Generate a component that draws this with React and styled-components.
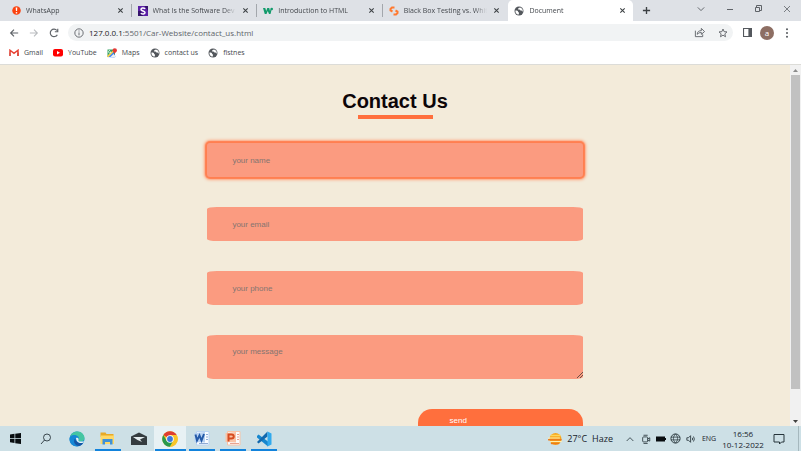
import React from "react";
import styled, { createGlobalStyle, css } from "styled-components";

const GlobalStyle = createGlobalStyle`
  *, *::before, *::after { box-sizing: border-box; }
  body { margin: 0; }
  button, input, textarea { margin: 0; padding: 0; border: 0; background: none; color: inherit; font: inherit; }
  svg { display: block; flex: none; }
`;

const Screen = styled.div`
  display: flex;
  flex-direction: column;
  height: 100vh;
  overflow: hidden;
  background: #fff;
  font-family: "Open Sans", "Noto Sans", sans-serif;
  font-size: 8px;
  line-height: 12px;
  color: #5f6368;
`;

const TabStrip = styled.header`
  display: flex;
  flex: none;
  height: 21px;
  padding-left: 6px;
  background: #dee1e6;
`;

const Tabs = styled.nav`
  display: flex;
  flex: 0 1 627px;
  min-width: 0;
`;

const TabItem = styled.div`
  display: flex;
  align-items: center;
  flex: 1 1 0;
  min-width: 0;
  gap: 5px;
  padding: 0 6px;
  border-right: 1px solid #a3a7ac;
  ${(p) =>
    p.$active
      ? css`
          background: #fff;
          border-radius: 5px 5px 0 0;
          border-right: 0;
        `
      : css`
          height: 13px;
          margin: 4px 0;
        `}
  ${(p) => p.$last && css`border-right-color: transparent;`}
`;

const TabTitle = styled.a`
  flex: 1;
  min-width: 0;
  overflow: hidden;
  white-space: nowrap;
  font-size: 7px;
  color: #44484d;
  text-decoration: none;
  mask-image: linear-gradient(to right, #000 calc(100% - 12px), transparent);
`;

const IconButton = styled.button`
  display: grid;
  place-items: center;
  flex: none;
  width: ${(p) => p.$w || 20}px;
  height: ${(p) => p.$h || 20}px;
  color: ${(p) => p.$color || "#5f6368"};
`;

const WindowControls = styled.div`
  display: flex;
  margin-left: auto;
`;

const Toolbar = styled.div`
  display: flex;
  align-items: center;
  flex: none;
  height: 23px;
  padding: 0 4px;
`;

const AddressBar = styled.div`
  display: flex;
  align-items: center;
  flex: 1;
  min-width: 0;
  height: 17px;
  margin: 0 4px;
  padding: 0 1px 0 6px;
  gap: 5px;
  border-radius: 9px;
  background: #f1f3f4;
`;

const Url = styled.div`
  flex: 1;
  min-width: 0;
  overflow: hidden;
  white-space: nowrap;
  color: #60656a;

  b { font-weight: 400; color: #202124; }
`;

const Avatar = styled.button`
  width: 14px;
  height: 14px;
  margin: 0 3px;
  border-radius: 50%;
  background: #8d6e63;
  color: #fff;
  line-height: 12px;
`;

const Bookmarks = styled.nav`
  display: flex;
  flex: none;
  height: 21px;
  padding: 3px 9px 0;
  gap: 10px;
  border-bottom: 1px solid #dcdcd8;
`;

const Bookmark = styled.a`
  display: flex;
  align-items: center;
  height: 12px;
  gap: 5px;
  font-size: 7px;
  color: #44484d;
  text-decoration: none;
`;

const Viewport = styled.div`
  display: flex;
  flex: 1;
  min-height: 0;
  background: #f3ebda;
`;

const Page = styled.main`
  flex: 1;
  min-width: 0;
  overflow: hidden;
  padding-top: 24px;
  font-family: "Liberation Sans", Arial, sans-serif;
`;

const Heading = styled.h1`
  display: flex;
  flex-direction: column;
  align-items: center;
  gap: 2px;
  margin: 0 0 24px;
  font-size: 20px;
  line-height: 24px;
  color: #0c0508;

  &::after {
    content: "";
    width: 75px;
    height: 4px;
    background: #ff6f3d;
  }
`;

const Form = styled.form`
  display: flex;
  flex-direction: column;
  gap: 30px;
  width: 47.5%;
  margin: 0 auto;
`;

const fieldStyle = css`
  display: block;
  width: 100%;
  padding: 0 25px;
  border-radius: 10px / 2px;
  background: #fb9b80;
  color: #33201a;
  outline: none;

  &::placeholder { color: #857570; opacity: 1; }
`;

const Field = styled.input`
  ${fieldStyle}
  height: 34px;
  ${(p) => p.$highlighted && css`
    border-radius: 3px;
    box-shadow: 0 0 1px 2px #ff7f50, 0 0 3px 3px #ffa782;
  `}
`;

const MessageBox = styled.div`
  position: relative;

  svg { position: absolute; right: 0; bottom: 1px; }
`;

const Message = styled.textarea`
  ${fieldStyle}
  height: 44px;
  padding: 11px 25px;
  resize: none;
`;

const SendButton = styled.button`
  align-self: flex-end;
  width: 44%;
  height: 34px;
  padding: 0 32px 10px;
  border-radius: 14px;
  background: #ff6f3d;
  color: #fff;
  text-align: left;
`;

const ScrollTrack = styled.div`
  display: flex;
  flex-direction: column;
  align-items: center;
  flex: none;
  width: 11px;
  background: #f1f1f1;
`;

const ScrollThumb = styled.div`
  width: 9px;
  height: 87%;
  margin-bottom: auto;
  background: #c1c1c1;
`;

const Taskbar = styled.footer`
  display: flex;
  flex: none;
  height: 25px;
  background: #cde0e6;
  color: #17222a;
`;

const Apps = styled.div`
  display: flex;
`;

const AppButton = styled.button`
  display: flex;
  flex-direction: column;
  align-items: center;
  justify-content: center;
  width: ${(p) => (p.$narrow ? 30 : 31)}px;
  padding-top: 2px;
  background: ${(p) => (p.$active ? "#e8f1f4" : "transparent")};

  &:nth-child(6) { width: 32px; }
  &:last-child { width: 32px; }
  svg { margin: auto; }

  &::after {
    content: "";
    width: ${(p) => (p.$active ? 31 : 26)}px;
    height: 2px;
    background: ${(p) => (p.$running ? "#1283dc" : "transparent")};
  }
`;

const Tray = styled.div`
  display: flex;
  align-items: center;
  margin-left: auto;
`;

const Weather = styled.button`
  display: flex;
  align-items: center;
  gap: 5px;
  margin-right: 9px;
  font-size: 9px;
`;

const Language = styled.button`
  width: 22px;
  font-size: 7px;
`;

const Clock = styled.button`
  width: 46px;
  line-height: 11px;
  text-align: center;
  white-space: nowrap;
`;

const DesktopEdge = styled.div`
  align-self: stretch;
  width: 3px;
  margin-left: 6px;
  border-left: 1px solid #a5b8be;
`;

const Line = ({ d, size = 10, box = 12, w = 1, children }) => (
  <svg width={size} height={size} viewBox={`0 0 ${box} ${box}`} fill="none" stroke="currentColor" strokeWidth={w} aria-hidden="true">
    {d && <path d={d} />}
    {children}
  </svg>
);

const CloseIcon = () => <Line size={7} box={8} w={1.2} d="M1.500 1.500l5 5M6.500 1.500l-5 5" />;

const GlobeIcon = () => (
  <svg width="10" height="10" viewBox="0 0 20 20" aria-hidden="true">
    <circle cx="10" cy="10" r="9" fill="#54585d" />
    <path d="M3 9c3 0 5 0 5 2s2 1 2 3-1 2-1 3.500C5 17 2 13 3 9zM12 3c-1 1-4 1-4 3s3 0 4 2 3 0 4 2 1 1 1.500 0C18 7 15 3.500 12 3z" fill="#fff" />
  </svg>
);

const WhatsAppIcon = () => (
  <svg width="9" height="9" viewBox="0 0 18 18" aria-hidden="true">
    <circle cx="9" cy="9" r="8.500" fill="#fb4310" />
    <path d="M7.4 3h3.2l-.5 7H7.9z" fill="#fff" />
    <circle cx="9" cy="13.5" r="1.700" fill="#fff" />
  </svg>
);

const SimpliIcon = () => (
  <svg width="10" height="10" viewBox="0 0 20 20" aria-hidden="true">
    <path fill="#5b20a5" d="M0 0h20v20H0z" />
    <path fill="#35136b" d="M0 10h6l4 10H0zM13 0h7v10z" />
    <path d="M14.500 5.500C11 3 6 4 6 7s8 3 8 6-5 4-8.500 1.500" fill="none" stroke="#fff" strokeWidth="3" />
  </svg>
);

const WIcon = () => (
  <svg width="10" height="8" viewBox="0 0 20 16" aria-hidden="true">
    <path d="M0 2h4.500l2 6 2-6h4l1.500 6 2-6h2l-3 12h-3L9.500 8 7 14H3.500z" fill="#139b6c" />
    <circle cx="17.500" cy="4" r="2.500" fill="#139b6c" />
  </svg>
);

const BoxIcon = () => (
  <svg width="10" height="10" viewBox="0 0 20 20" fill="none" stroke="#ff7a30" strokeWidth="4" aria-hidden="true">
    <path d="M11 3H6L3 6v3l4 2M9 17h5l3-3v-3l-4-2" />
  </svg>
);

const GmailIcon = () => (
  <svg width="10" height="8" viewBox="0 0 20 16" fill="none" strokeWidth="3" aria-hidden="true">
    <path d="M2 14V2.500l8 6 8-6V14" stroke="#e94335" />
    <path d="M2 14V7" stroke="#d95a50" />
    <path d="M18 14V7" stroke="#d9453a" />
  </svg>
);

const YouTubeIcon = () => (
  <svg width="10" height="8" viewBox="0 0 20 16" aria-hidden="true">
    <rect width="20" height="15" rx="4" fill="#f00" />
    <path d="M8 4l6 3.500L8 11z" fill="#fff" />
  </svg>
);

const MapsIcon = () => (
  <svg width="10" height="10" viewBox="0 0 20 20" aria-hidden="true">
    <path fill="#34a263" d="M1 3h15v15H1z" />
    <path fill="#4285f4" d="M1 18L12 7l5 10-2 2z" />
    <path fill="#eef0f1" d="M7 18l6-6 4 4v3z" />
    <path fill="#fbd04a" d="M0 16L14 3l2 2L2 19z" />
    <path d="M15 12c0-4-4-4-4-7a4.500 4.500 0 019 0c0 3-4 4-5 7z" fill="#e53935" />
    <path d="M6 5a2.500 2.500 0 102 3H6" fill="none" stroke="#fff" strokeWidth="1.500" />
  </svg>
);

const StartIcon = () => (
  <svg width="11" height="11" viewBox="0 0 22 22" fill="#080d10" aria-hidden="true">
    <path d="M0 3l9-1.300V10H0zM10.500 1.500L22 0v10H10.500zM0 11.500h9V20l-9-1.300zM10.500 11.500H22V22l-11.500-1.600z" />
  </svg>
);

const SearchIcon = () => (
  <Line size={12} box={12} w={0.8}><circle cx="7" cy="4.500" r="3.500" /><path d="M4.500 7L1 11" /></Line>
);

const EdgeIcon = () => (
  <svg width="16" height="16" viewBox="0 0 32 32" aria-hidden="true">
    <circle cx="16" cy="16" r="15" fill="#1688d4" />
    <path d="M1.500 13C4 4 11 1 17 1c9 0 14 7 14 13 0 5-4 7-8 7-3 0-5-1-4-3 2-3 1-8-5-9C8 8 3 10 1.500 13z" fill="#45c5a1" />
    <path d="M1.500 13C5 7 13 6 17 11c-5 0-8 4-7 9 1 4 4 8 9 10C8 33-1 24 1.500 13z" fill="#1687d5" />
    <path d="M12 15c-5 7 1 15 8 15 4-1 7-4 9-7-6 3-15 0-17-8z" fill="#1555a5" />
    <path d="M14 14c4-2 6 1 5 4-1 2 1 3 4 3h8c-2 3-4 3-7 3-5 0-10-4-10-10z" fill="#e7f3f7" />
  </svg>
);

const FolderIcon = () => (
  <svg width="15" height="13" viewBox="0 0 30 26" aria-hidden="true">
    <path d="M1 1h10l2 3h14v6H1z" fill="#e8aa26" />
    <path d="M1 7h27v17H1z" fill="#ffd968" />
    <path d="M5 14h20v11h-5v-5H10v5H5z" fill="#3f91d8" />
  </svg>
);

const MailIcon = () => (
  <svg width="16" height="14" viewBox="0 0 32 28" aria-hidden="true">
    <path d="M0 9L16 1l16 8v17H0z" fill="#343c40" />
    <path d="M4 10h24l-10 5 4 5-9-4z" fill="#e4edef" />
  </svg>
);

const ChromeIcon = () => (
  <svg width="16" height="16" viewBox="0 0 32 32" aria-hidden="true">
    <circle cx="16" cy="16" r="15.500" fill="#f8c529" />
    <path d="M16 16L2.600 8.200A15.500 15.500 0 0129.400 8.200z" fill="#de3d31" />
    <path d="M2.600 8.200A15.500 15.500 0 0016 31.500L22.500 20 16 16 9.500 20z" fill="#29994d" />
    <path d="M29.400 8.200H16v8l6.500 4L16 31.500A15.500 15.500 0 0029.400 8.200z" fill="#f8c529" />
    <circle cx="16" cy="16" r="7.500" fill="#fff" />
    <circle cx="16" cy="16" r="5.800" fill="#3978dc" />
  </svg>
);

const OfficeIcon = ({ color, light, children }) => (
  <svg width="16" height="15" viewBox="0 0 32 30" aria-hidden="true">
    <path d="M5 1h25v27H5z" fill="#fafcff" stroke={light} strokeWidth="2" />
    <path d="M24 7h4M24 12h4M24 17h4M10 25h18" stroke={color} strokeWidth="1" />
    <path d="M1 4l21-2v21L1 22z" fill={light} />
    <g fill="none" stroke={color} strokeWidth="4">{children}</g>
  </svg>
);

const CodeIcon = () => (
  <svg width="16" height="16" viewBox="0 0 32 32" aria-hidden="true">
    <path d="M2 10l3-3 19 14v10L2 13z" fill="#1687cf" />
    <path d="M23 1v10L5 25l-3-3z" fill="#1268ad" />
    <path d="M23 1l8 4v22l-8 4z" fill="#30a9ed" />
  </svg>
);

const HazeIcon = () => (
  <svg width="14" height="14" viewBox="0 0 28 28" aria-hidden="true">
    <circle cx="15" cy="14" r="12" fill="#f7a51c" />
    <path d="M5 7h20" stroke="#ffd65a" strokeWidth="3" />
    <path d="M1 12h22M5 19h22" stroke="#fff0b0" strokeWidth="2" strokeLinecap="round" />
    <path d="M1 15.500h25M7 23h14" stroke="#ed7b19" strokeWidth="3" strokeLinecap="round" />
  </svg>
);

const tabs = [
  { title: "WhatsApp", icon: <WhatsAppIcon /> },
  { title: "What Is the Software Dev", icon: <SimpliIcon /> },
  { title: "Introduction to HTML", icon: <WIcon /> },
  { title: "Black Box Testing vs. Whit", icon: <BoxIcon />, last: true },
  { title: "Document", icon: <GlobeIcon />, active: true },
];

const bookmarks = [
  { title: "Gmail", icon: <GmailIcon /> },
  { title: "YouTube", icon: <YouTubeIcon /> },
  { title: "Maps", icon: <MapsIcon /> },
  { title: "contact us", icon: <GlobeIcon /> },
  { title: "fistnes", icon: <GlobeIcon /> },
];

const apps = [
  { name: "Start", icon: <StartIcon />, narrow: true },
  { name: "Search", icon: <SearchIcon /> },
  { name: "Edge", icon: <EdgeIcon /> },
  { name: "File Explorer", icon: <FolderIcon />, running: true },
  { name: "Mail", icon: <MailIcon /> },
  { name: "Chrome", icon: <ChromeIcon />, running: true, active: true },
  { name: "Word", icon: <OfficeIcon color="#255aa8" light="#b9d3f3"><path d="M3 7l3 12 5-10 4 10 5-13" /></OfficeIcon>, running: true },
  { name: "PowerPoint", icon: <OfficeIcon color="#d64b20" light="#f9c3a6"><path d="M7 21V7h6c6 0 6 8 0 8H7" /></OfficeIcon>, running: true },
  { name: "Visual Studio Code", icon: <CodeIcon />, running: true },
];

export default function App() {
  return (
    <Screen>
      <GlobalStyle />
      <TabStrip>
        <Tabs aria-label="Tabs">
          {tabs.map((t) => (
            <TabItem key={t.title} $active={t.active} $last={t.last}>
              {t.icon}
              <TabTitle href="#">{t.title}</TabTitle>
              <IconButton $w={9} $h={12} $color="#3c4043" aria-label={`Close ${t.title}`}><CloseIcon /></IconButton>
            </TabItem>
          ))}
        </Tabs>
        <IconButton $w={27} $color="#3c4043" aria-label="New tab"><Line size={9} box={10} w={1.500} d="M5 1v8M1 5h8" /></IconButton>
        <WindowControls>
          <IconButton $w={29} $h={18} aria-label="Search tabs"><Line size={8} box={10} w={1.200} d="M1 3l4 4 4-4" /></IconButton>
          <IconButton $w={29} $h={18} aria-label="Minimize"><Line size={8} box={8} d="M1 4.500h6" /></IconButton>
          <IconButton $w={28} $h={18} aria-label="Restore"><Line size={8} box={8} d="M1.500 2.500h4v4h-4zM2.500 2V.5h5v5H6" /></IconButton>
          <IconButton $w={29} $h={18} aria-label="Close window"><Line size={8} box={8} w={0.8} d="M1 1l6 6M7 1L1 7" /></IconButton>
        </WindowControls>
      </TabStrip>

      <Toolbar>
        <IconButton aria-label="Back"><Line w={1.400} d="M11 6H2M6 2L2 6l4 4" /></IconButton>
        <IconButton $color="#b9bcbf" aria-label="Forward"><Line w={1.300} d="M1 6h9M6 2l4 4-4 4" /></IconButton>
        <IconButton aria-label="Reload"><Line w={1.400} d="M10 8a4.500 4.500 0 11-.5-5M10.500 1v3.500H7" /></IconButton>
        <AddressBar>
          <Line size={10} box={12} w={1.100}><circle cx="6" cy="6" r="5" /><path d="M6 5.300v3.500M6 3v1.200" /></Line>
          <Url><b>127.0.0.1</b>:5501/Car-Website/contact_us.html</Url>
          <IconButton aria-label="Share"><Line size={11} d="M1.500 4v6.500h8V8M3.500 8c0-3 2-4 4.500-4V1.500L11.500 5 8 8V6C6 6 5 6.500 3.500 8z" /></IconButton>
          <IconButton $w={18} aria-label="Bookmark"><Line size={10} w={1.100} d="M6 1.200l1.300 3.200 3.500.3-2.600 2.300.8 3.500-3-1.900-3 1.900.8-3.500L1.200 4.700l3.500-.3z" /></IconButton>
        </AddressBar>
        <IconButton aria-label="Side panel"><svg width="9" height="9" viewBox="0 0 10 10" fill="#54585d"><path fillRule="evenodd" d="M0 0h10v10H0zM1.200 1.200v7.600H6V1.200z" /></svg></IconButton>
        <Avatar aria-label="Profile">a</Avatar>
        <IconButton aria-label="Menu"><svg width="4" height="10" viewBox="0 0 4 10" fill="#54585d"><circle cx="2" cy="1.200" r="1" /><circle cx="2" cy="5" r="1" /><circle cx="2" cy="8.800" r="1" /></svg></IconButton>
      </Toolbar>

      <Bookmarks aria-label="Bookmarks">
        {bookmarks.map((b) => (
          <Bookmark key={b.title} href="#">{b.icon}{b.title}</Bookmark>
        ))}
      </Bookmarks>

      <Viewport>
        <Page>
          <Heading>Contact Us</Heading>
          <Form onSubmit={(e) => e.preventDefault()}>
            <Field type="text" placeholder="your name" aria-label="your name" $highlighted />
            <Field type="email" placeholder="your email" aria-label="your email" />
            <Field type="tel" placeholder="your phone" aria-label="your phone" />
            <MessageBox>
              <Message placeholder="your message" aria-label="your message" />
              <svg width="6" height="6" viewBox="0 0 6 6" stroke="#6d5148" aria-hidden="true"><path d="M0 6l6-6M3 6l3-3" /></svg>
            </MessageBox>
            <SendButton type="submit">send</SendButton>
          </Form>
        </Page>
        <ScrollTrack aria-hidden="true">
          <IconButton as="span" $w={11} $h={10}><svg width="5" height="3" viewBox="0 0 5 3" fill="#8b8b8b"><path d="M0 3l2.500-3L5 3z" /></svg></IconButton>
          <ScrollThumb />
          <IconButton as="span" $w={11} $h={10}><svg width="5" height="3" viewBox="0 0 5 3" fill="#404040"><path d="M0 0l2.500 3L5 0z" /></svg></IconButton>
        </ScrollTrack>
      </Viewport>

      <Taskbar>
        <Apps>
          {apps.map((a) => (
            <AppButton key={a.name} aria-label={a.name} $running={a.running} $active={a.active} $narrow={a.narrow}>{a.icon}</AppButton>
          ))}
        </Apps>
        <Tray>
          <Weather><HazeIcon /><span>27°C</span><span>Haze</span></Weather>
          <IconButton $w={16} $color="#26343a" aria-label="Hidden icons"><Line size={8} d="M1 9l5-5 5 5" w={1.200} /></IconButton>
          <IconButton $w={15} $color="#26343a" aria-label="Meet now"><Line size={10}><rect x="2" y="3.500" width="6" height="6" rx="1" /><path d="M8 6l2.500-1.500v4L8 7.500M3 1.500h5M3 11.500h5" /></Line></IconButton>
          <IconButton $w={15} aria-label="Battery"><svg width="10" height="6" viewBox="0 0 10 6" fill="#080d10"><path d="M0 .5h9V2h1v2H9v1.500H0z" /></svg></IconButton>
          <IconButton $w={15} $color="#26343a" aria-label="Network"><Line size={11}><circle cx="6" cy="6" r="5" /><path d="M1 4.500h10M1 7.500h10M6 1C3 4 3 8 6 11M6 1c3 3 3 7 0 10" strokeWidth=".8" /></Line></IconButton>
          <IconButton $w={15} $color="#26343a" aria-label="Volume"><Line size={10} d="M1 4.500h2L5.500 2v8L3 7.500H1zM7.500 4.500q1 1.500 0 3M9 3q2 3 0 6" /></IconButton>
          <Language>ENG</Language>
          <Clock>16:56<br />10-12-2022</Clock>
          <IconButton $w={26} $color="#26343a" aria-label="Notifications"><Line size={12} d="M1 1.500h10v7.500H8.500L6.500 11V9H1z" /></IconButton>
          <DesktopEdge />
        </Tray>
      </Taskbar>
    </Screen>
  );
}
